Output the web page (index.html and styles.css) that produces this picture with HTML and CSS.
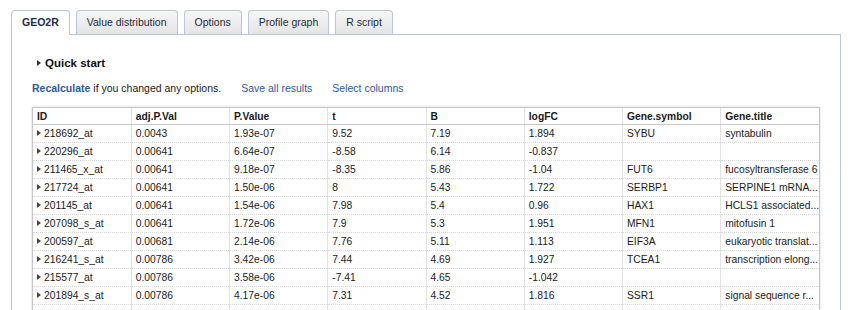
FILE: index.html
```html
<!DOCTYPE html>
<html lang="en">

<head>
    <meta charset="UTF-8">
    <title>GEO2R</title>
    <link rel="stylesheet" href="styles.css">
</head>

<body>
    <ul class="tabs">
        <li class="select"><a href="#">GEO2R</a></li>
        <li><a href="#">Value distribution</a></li>
        <li><a href="#">Options</a></li>
        <li><a href="#">Profile graph</a></li>
        <li><a href="#">R script</a></li>
    </ul>
    <div class="panel">
        <div class="quick"><span class="arrow"></span>Quick start</div>
        <div class="actions">
            <span><a href="#" class="strong">Recalculate</a> if you changed any options.</span>
            <a href="#">Save all results</a>
            <a href="#">Select columns</a>
        </div>
        <div class="result">
            <table>
                <thead>
                    <tr>
                        <th>ID</th>
                        <th>adj.P.Val</th>
                        <th>P.Value</th>
                        <th>t</th>
                        <th>B</th>
                        <th>logFC</th>
                        <th>Gene.symbol</th>
                        <th>Gene.title</th>
                    </tr>
                </thead>
                <tbody>
                    <tr>
                        <td class="id"><span class="arrow"></span>218692_at</td>
                        <td>0.0043</td><td>1.93e-07</td><td>9.52</td><td>7.19</td><td>1.894</td><td>SYBU</td><td>syntabulin</td>
                    </tr>
                    <tr>
                        <td class="id"><span class="arrow"></span>220296_at</td>
                        <td>0.00641</td><td>6.64e-07</td><td>-8.58</td><td>6.14</td><td>-0.837</td><td></td><td></td>
                    </tr>
                    <tr>
                        <td class="id"><span class="arrow"></span>211465_x_at</td>
                        <td>0.00641</td><td>9.18e-07</td><td>-8.35</td><td>5.86</td><td>-1.04</td><td>FUT6</td><td>fucosyltransferase 6</td>
                    </tr>
                    <tr>
                        <td class="id"><span class="arrow"></span>217724_at</td>
                        <td>0.00641</td><td>1.50e-06</td><td>8</td><td>5.43</td><td>1.722</td><td>SERBP1</td><td>SERPINE1 mRNA...</td>
                    </tr>
                    <tr>
                        <td class="id"><span class="arrow"></span>201145_at</td>
                        <td>0.00641</td><td>1.54e-06</td><td>7.98</td><td>5.4</td><td>0.96</td><td>HAX1</td><td>HCLS1 associated...</td>
                    </tr>
                    <tr>
                        <td class="id"><span class="arrow"></span>207098_s_at</td>
                        <td>0.00641</td><td>1.72e-06</td><td>7.9</td><td>5.3</td><td>1.951</td><td>MFN1</td><td>mitofusin 1</td>
                    </tr>
                    <tr>
                        <td class="id"><span class="arrow"></span>200597_at</td>
                        <td>0.00681</td><td>2.14e-06</td><td>7.76</td><td>5.11</td><td>1.113</td><td>EIF3A</td><td>eukaryotic translat...</td>
                    </tr>
                    <tr>
                        <td class="id"><span class="arrow"></span>216241_s_at</td>
                        <td>0.00786</td><td>3.42e-06</td><td>7.44</td><td>4.69</td><td>1.927</td><td>TCEA1</td><td>transcription elong...</td>
                    </tr>
                    <tr>
                        <td class="id"><span class="arrow"></span>215577_at</td>
                        <td>0.00786</td><td>3.58e-06</td><td>-7.41</td><td>4.65</td><td>-1.042</td><td></td><td></td>
                    </tr>
                    <tr>
                        <td class="id"><span class="arrow"></span>201894_s_at</td>
                        <td>0.00786</td><td>4.17e-06</td><td>7.31</td><td>4.52</td><td>1.816</td><td>SSR1</td><td>signal sequence r...</td>
                    </tr>
                    <tr>
                        <td></td><td></td><td></td><td></td><td></td><td></td><td></td><td></td>
                    </tr>
                </tbody>
            </table>
        </div>
    </div>
</body>

</html>
```

FILE: styles.css
```css
* {
    margin: 0;
    padding: 0;
    list-style: none;
}

body {
    font-family: "Liberation Sans", Arial, sans-serif;
    font-size: 10.5px;
    color: #1a1a1a;
    background: #fff;
}

a {
    text-decoration: none;
    color: #2d5a98;
}

.tabs {
    display: flex;
    padding: 10px 0 0 11px;
    height: 24px;
    width: 830px;
}

.tabs li {
    margin-right: 6px;
    height: 23px;
    border: 1px solid #b8c8da;
    border-bottom: none;
    border-radius: 4px 4px 0 0;
    background: linear-gradient(#f6f6f6, #e4e4e4);
}

.tabs li a {
    display: block;
    padding: 0 10px;
    line-height: 22px;
    color: #1f2b40;
}

.tabs li.select {
    height: 24px;
    margin-bottom: -1px;
    background: #fff;
    position: relative;
}

.tabs li.select a {
    font-weight: bold;
    color: #1c2c4c;
}

.panel {
    width: 830px;
    margin-left: 11px;
    border: 1px solid #b8c8da;
    border-bottom: none;
    padding: 19px 20px 0 20px;
    box-sizing: border-box;
    height: 276px;
    overflow: hidden;
}

.arrow {
    display: inline-block;
    width: 0;
    height: 0;
    border-top: 3px solid transparent;
    border-bottom: 3px solid transparent;
    border-left: 4px solid #333;
    vertical-align: 1px;
}

.quick {
    font-size: 11.5px;
    font-weight: bold;
    color: #111;
    line-height: 18px;
    padding-left: 5px;
}

.quick .arrow {
    margin-right: 4px;
}

.actions {
    display: flex;
    margin-top: 8px;
    line-height: 16px;
}

.actions span {
    margin-right: 20px;
}

.actions a {
    margin-right: 20px;
}

.actions span a {
    margin-right: 0;
}

.actions .strong {
    font-weight: bold;
}

.result {
    margin-top: 11px;
    width: 788px;
    border: 1px solid #c6c6c6;
    box-shadow: 0 0 2px rgba(0, 0, 0, 0.2);
    box-sizing: border-box;
}

.result table {
    width: 100%;
    border-collapse: collapse;
    table-layout: fixed;
    font-size: 10.3px;
}

.result th,
.result td {
    text-align: left;
    padding: 0 0 0 4px;
    height: 17px;
    white-space: nowrap;
    overflow: hidden;
    border-left: 1px solid #e2e2e2;
}

.result th:first-child,
.result td:first-child {
    border-left: none;
}

.result th {
    font-weight: bold;
    height: 16px;
    border-bottom: 1px solid #c8c8c8;
}

.result td {
    border-bottom: 1px dotted #d8d8d8;
}

.result td.id .arrow {
    border-left-color: #444;
    margin-right: 3px;
}
```
